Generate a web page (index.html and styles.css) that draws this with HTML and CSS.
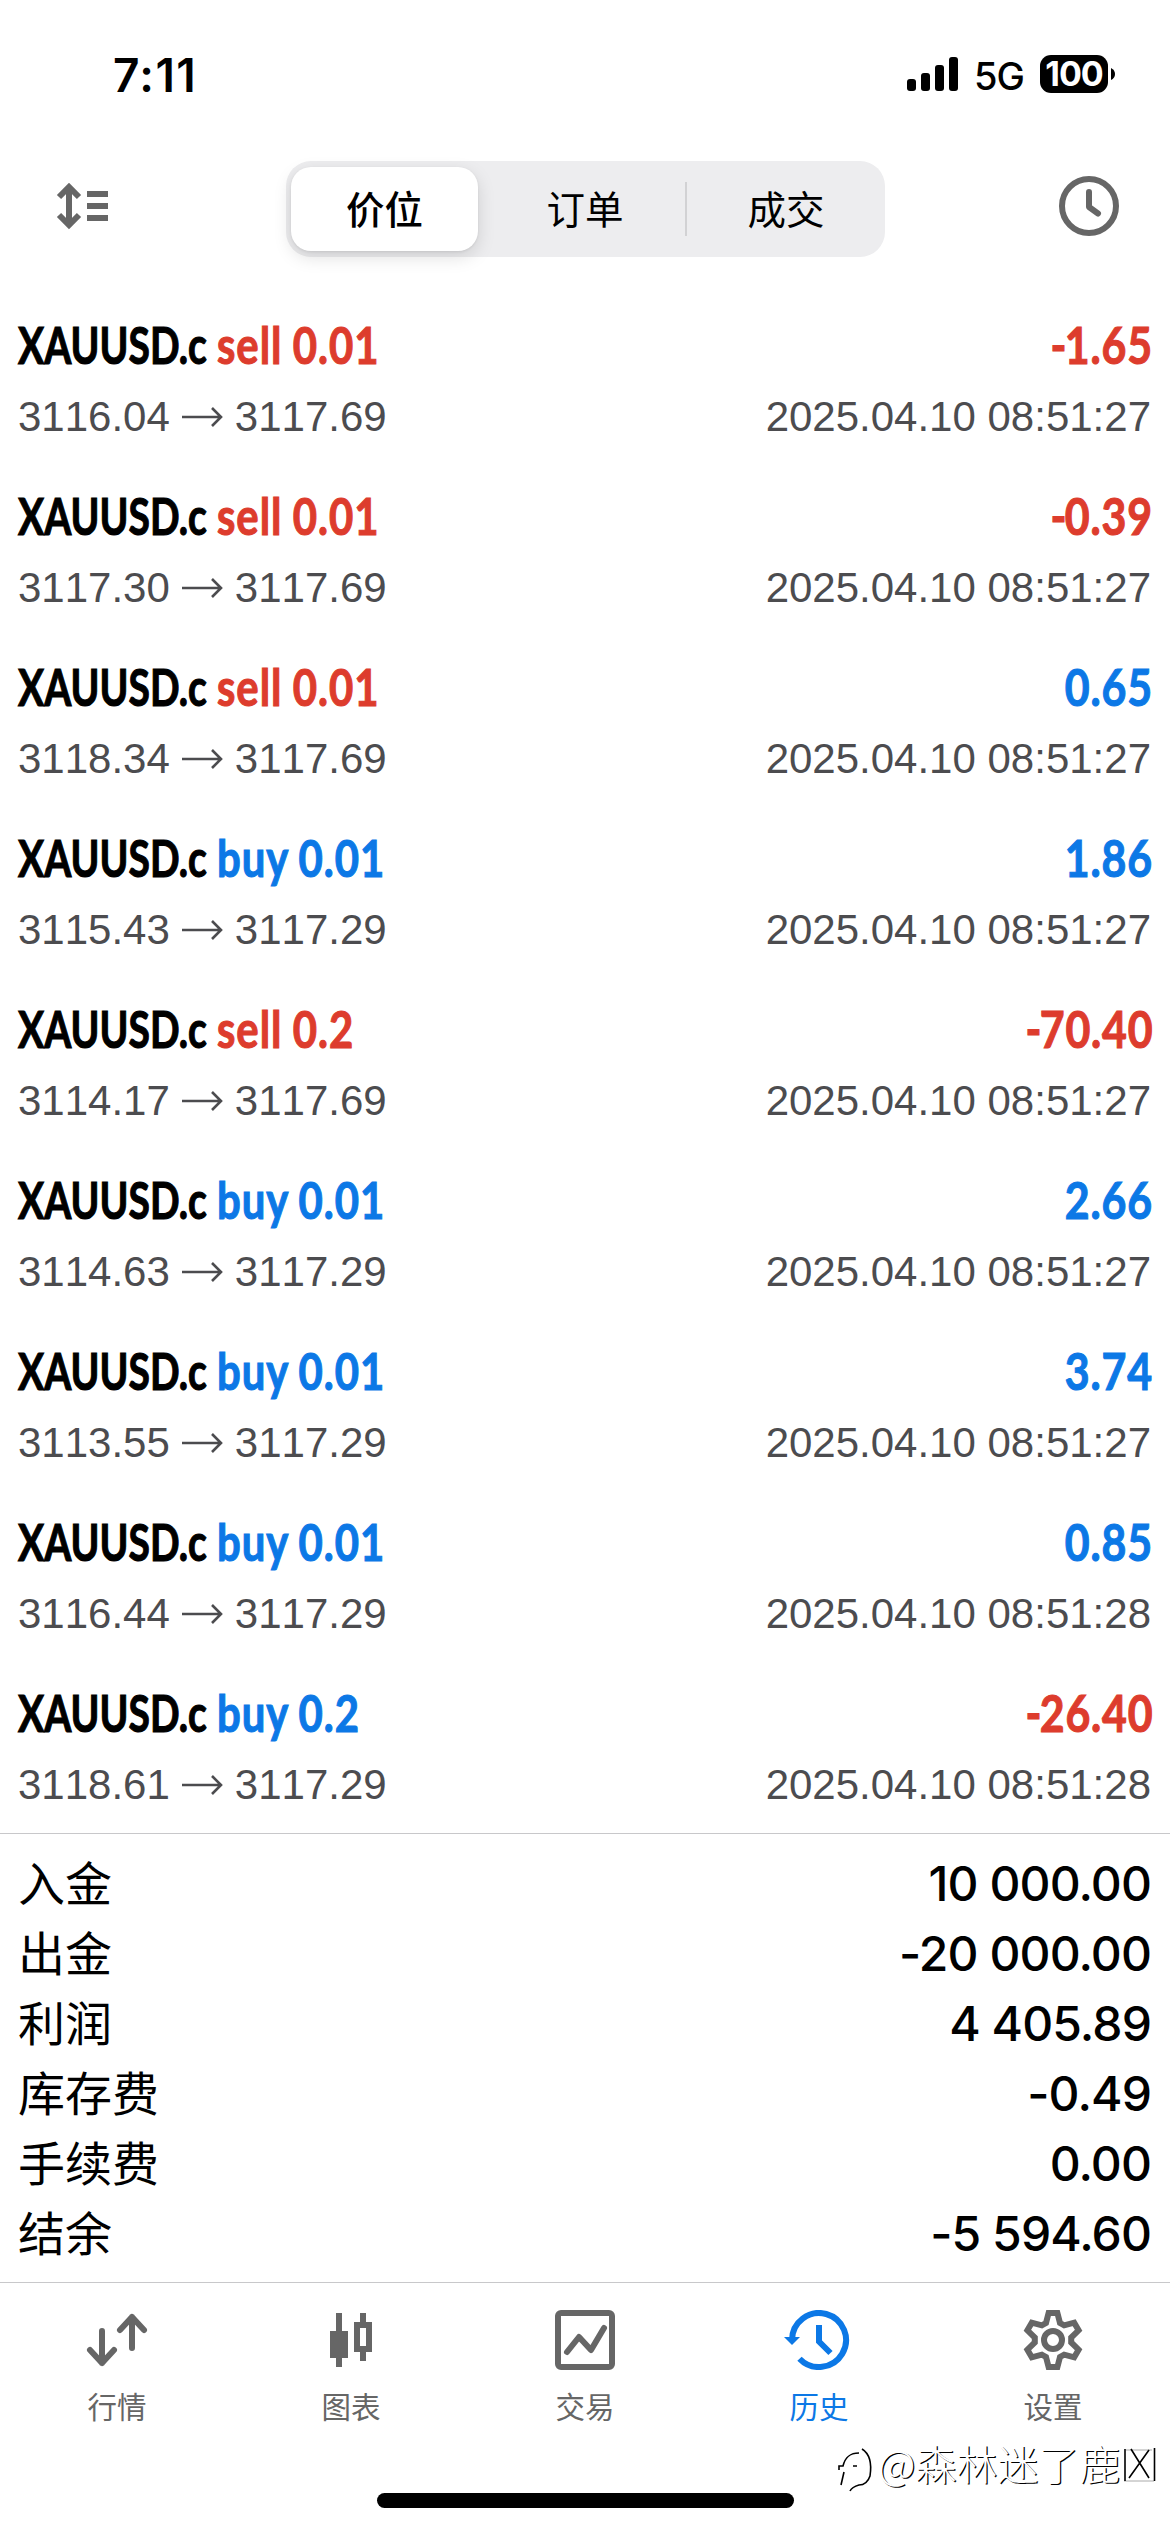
FILE: index.html
```html
<!DOCTYPE html>
<html lang="zh-CN">
<head>
<meta charset="utf-8">
<title>历史</title>
<link rel="stylesheet" href="styles.css">
</head>
<body>
<div class="screen">
  <div class="status">
    <span class="time">7:11</span>
    <div class="status-right">
      <svg class="signal" width="51" height="34" viewBox="0 0 51 34"><rect x="0" y="22" width="9" height="12" rx="3"/><rect x="14" y="16" width="9" height="18" rx="3"/><rect x="28" y="8" width="9" height="26" rx="3"/><rect x="42" y="0" width="9" height="34" rx="3"/></svg>
      <span class="network">5G</span>
      <span class="battery">100</span>
      <svg class="nub" width="4" height="12" viewBox="0 0 4 12"><path d="M0 0Q4 2 4 6T0 12Z"/></svg>
    </div>
  </div>

  <header class="toolbar">
    <svg class="icon" width="54" height="48" viewBox="0 0 54 48" fill="none" stroke="#666" stroke-width="6"><path d="M13 5V43M3 15 13 5 23 15M3 33 13 43 23 33M31 12H52M31 24H52M31 36H52"/></svg>
    <nav class="segments">
      <span class="segment active">价位</span>
      <span class="segment">订单</span>
      <span class="segment divided">成交</span>
    </nav>
    <svg class="icon" width="60" height="60" viewBox="0 0 60 60" fill="none" stroke="#666" stroke-width="6"><circle cx="30" cy="30" r="27"/><path d="M30 16V31L39 37.5" stroke-linecap="round" stroke-linejoin="round"/></svg>
  </header>

  <main class="deals" id="deals"></main>

  <section class="summary">
    <div class="total"><span>入金</span><b>10 000.00</b></div>
    <div class="total"><span>出金</span><b>-20 000.00</b></div>
    <div class="total"><span>利润</span><b>4 405.89</b></div>
    <div class="total"><span>库存费</span><b>-0.49</b></div>
    <div class="total"><span>手续费</span><b>0.00</b></div>
    <div class="total"><span>结余</span><b>-5 594.60</b></div>
  </section>

  <footer class="tabbar">
    <div class="tab">
      <svg width="66" height="60" viewBox="-33 -30 66 60" fill="none" stroke="#666" stroke-width="6" stroke-linecap="round" stroke-linejoin="round"><path d="M-15-9V23M-27 10-15 23-3 10M15 8V-23M3-10 15-23 27-10"/></svg>
      <span>行情</span>
    </div>
    <div class="tab">
      <svg width="66" height="60" viewBox="-33 -30 66 60"><path fill="#666" d="M-15-27h6v18h6v27h-6v9h-6v-9h-6v-27h6zM9-27h6v9h6v30h-6v9H9v-9H3v-30h6zM9-12V6h6v-18z"/></svg>
      <span>图表</span>
    </div>
    <div class="tab">
      <svg width="66" height="60" viewBox="-33 -30 66 60" fill="none" stroke="#666" stroke-width="6" stroke-linecap="round" stroke-linejoin="round"><rect x="-27" y="-27" width="54" height="54" rx="3"/><path d="M-18 12-6-3 6 10 19-12"/></svg>
      <span>交易</span>
    </div>
    <div class="tab selected">
      <svg width="72" height="60" viewBox="-36 -30 72 60" fill="none" stroke="#0c78e6" stroke-width="6"><path d="M-27 0A27 27 0 1 1-19.5 18.7M0-15V1.500L11.500 13"/><path d="M-35-3h16l-8 8z" fill="#0c78e6" stroke="none"/></svg>
      <span>历史</span>
    </div>
    <div class="tab">
      <svg width="66" height="60" viewBox="-33 -30 66 60" fill="none" stroke="#666" stroke-width="6"><circle r="9"/><path d="M-4.400-27H4.400L7-17 11.200-14.600 21.200-17.300 25.600-9.700 18.200-2.400V2.400L25.600 9.700 21.200 17.300 11.200 14.600 7 17 4.400 27H-4.400L-7 17-11.200 14.600-21.200 17.300-25.600 9.700-18.200 2.400V-2.400L-25.600-9.700-21.200-17.300-11.200-14.600-7-17Z"/></svg>
      <span>设置</span>
    </div>
  </footer>
  <div class="home-bar"></div>

  <div class="watermark">
    <svg width="40" height="48" viewBox="0 0 40 48" fill="none" stroke="#000" stroke-width="1.600"><path d="M3 38 6 25M1 23V19H5C7 11 11 6 21 6M24 2C32 7 34 16 32 29Q29 38 21 38Q14 40 12 44M15 19H19"/></svg>
    <span>@森林迷了鹿</span>
    <svg class="box" width="34" height="36" viewBox="0 0 34 36" fill="none"><path d="M1 34H31M3 3H29" stroke="#aaa" stroke-width="1"/><path d="M2 2V34M31.500 1V34M8 2 26 31M26 3 6 31" stroke="#000" stroke-width="1.600"/></svg>
  </div>
</div>
<script src="deals.js"></script>
</body>
</html>
```
FILE: styles.css
```css
* { box-sizing: border-box; }
body { margin: 0; background: #fff; }
.screen {
  position: relative;
  width: 1170px;
  height: 2532px;
  display: flex;
  flex-direction: column;
  overflow: hidden;
  background: #fff;
  color: #000;
  font-family: Inter, "Noto Sans CJK SC", sans-serif;
}
.status {
  height: 148px;
  flex: none;
  display: flex;
  justify-content: space-between;
  align-items: center;
  padding: 0 55px 0 113px;
}
.time { font-size: 46px; font-weight: 600; letter-spacing: 1.4px; line-height: 48px; padding-top: 1px; }
.status-right { display: flex; align-items: center; }
.signal { margin-right: 16px; }
.network { width: 49px; margin-right: 17px; font-size: 38px; font-weight: 450; line-height: 48px; padding-top: 3px; letter-spacing: -1px; }
.battery {
  width: 68px;
  height: 38px;
  border-radius: 11px;
  background: #000;
  color: #fff;
  font-size: 34px;
  font-weight: 700;
  line-height: 38px;
  text-align: center;
  letter-spacing: -1px;
}
.nub { margin-left: 3px; }
.toolbar {
  height: 146px;
  flex: none;
  display: flex;
  justify-content: space-between;
  align-items: flex-start;
  padding: 13px 51px 0 56px;
}
.toolbar .icon { margin-top: 15px; }
.toolbar .icon:first-child { margin-top: 21px; }
.segments {
  width: 599px;
  height: 96px;
  margin-left: 2px;
  display: grid;
  grid-template-columns: 187px 1fr 1fr;
  gap: 6px;
  padding: 6px 5px;
  border-radius: 25px;
  background: #ededef;
}
.segment {
  display: flex;
  align-items: center;
  justify-content: center;
  padding: 0 0 4px 7px;
  font: 400 38.5px/50px "Noto Sans CJK SC", sans-serif;
}
.segment.active {
  padding-left: 0;
  border-radius: 20px;
  background: #fff;
  font-weight: 500;
  box-shadow: 0 6px 18px rgba(0, 0, 0, .13), 0 1px 3px rgba(0, 0, 0, .08);
}
.segment.divided {
  background: linear-gradient(#d2d2d4, #d2d2d4) 0 50% / 2px 54px no-repeat;
}
.deals { height: 1539px; flex: none; }
.deal { height: 171px; padding: 24px 19px 0 18px; }
.deal-row { display: flex; justify-content: space-between; align-items: center; }
.deal-head { height: 54px; font: 700 51px/54px Lato, sans-serif; -webkit-text-stroke: 1.1px currentColor; }
.deal-title { white-space: nowrap; }
.squeeze { display: inline-block; white-space: nowrap; transform-origin: 0 50%; transform: scaleX(.765); }
.symbol { width: 199px; display: inline-block; }
.deal-title .sell, .deal-title .buy { transform: scaleX(.82); letter-spacing: 1.2px; word-spacing: -1px; }
.deal-profit .squeeze { transform-origin: 100% 50%; transform: scaleX(.84); letter-spacing: 1px; margin-right: -2px; }
.minus { letter-spacing: -2px; }
.sell, .loss { color: #dd3c2d; }
.buy, .gain { color: #0c78e6; }
.deal-detail { height: 48px; margin-top: 21px; font: 42px/48px "Liberation Sans", sans-serif; font-kerning: none; color: #4c4c4f; }
.prices { display: flex; align-items: center; gap: 11.5px; }
.summary {
  height: 449px;
  flex: none;
  padding: 15px 19px 0 18px;
  border-top: 1px solid #c8c8ca;
}
.total { height: 70px; display: flex; justify-content: space-between; align-items: center; }
.total span { margin-top: -7px; font: 400 47px/70px "Noto Sans CJK SC", sans-serif; }
.total b { font-size: 48px; font-weight: 500; line-height: 70px; letter-spacing: -0.9px; }
.tabbar {
  height: 211px;
  flex: none;
  display: grid;
  grid-template-columns: repeat(5, 1fr);
  border-top: 1px solid #c8c8ca;
}
.tab { display: flex; flex-direction: column; align-items: center; padding-top: 27px; color: #666; }
.tab span { margin-top: 13px; font: 400 29.5px/44px "Noto Sans CJK SC", sans-serif; }
.tab.selected { color: #0c78e6; }
.home-bar { width: 417px; height: 15px; margin: 0 auto; border-radius: 8px; background: #000; flex: none; }
.watermark {
  position: absolute;
  left: 838px;
  top: 2447px;
  display: flex;
  color: #fff;
  font: 300 41px/40px "Noto Sans CJK SC", sans-serif;
  text-shadow: 1.2px 1.2px 0 #000;
}
.watermark span { white-space: nowrap; margin-top: -5px; }
.watermark svg { flex: none; }
.watermark .box { margin-left: 3px; }
```
FILE: deals.js
```js
const deals = [
  ["sell", "0.01", "-1.65", "3116.04", "3117.69", "27"],
  ["sell", "0.01", "-0.39", "3117.30", "3117.69", "27"],
  ["sell", "0.01", "0.65", "3118.34", "3117.69", "27"],
  ["buy", "0.01", "1.86", "3115.43", "3117.29", "27"],
  ["sell", "0.2", "-70.40", "3114.17", "3117.69", "27"],
  ["buy", "0.01", "2.66", "3114.63", "3117.29", "27"],
  ["buy", "0.01", "3.74", "3113.55", "3117.29", "27"],
  ["buy", "0.01", "0.85", "3116.44", "3117.29", "28"],
  ["buy", "0.2", "-26.40", "3118.61", "3117.29", "28"],
];

document.getElementById("deals").innerHTML = deals.map(([side, volume, profit, open, close, sec]) => `
  <article class="deal">
    <div class="deal-row deal-head">
      <div class="deal-title"><span class="symbol"><span class="squeeze">XAUUSD.c</span></span><span class="squeeze ${side}">${side} ${volume}</span></div>
      <div class="deal-profit"><span class="squeeze ${profit[0] === "-" ? "loss" : "gain"}">${profit.replace("-", '<span class="minus">-</span>')}</span></div>
    </div>
    <div class="deal-row deal-detail">
      <div class="prices"><span>${open}</span><svg width="42" height="22" viewBox="0 0 42 22" fill="none" stroke="#4c4c4f" stroke-width="2.6"><path d="M1 11H40M31 2 40 11 31 20"/></svg><span>${close}</span></div>
      <time>2025.04.10 08:51:${sec}</time>
    </div>
  </article>`).join("");
```
